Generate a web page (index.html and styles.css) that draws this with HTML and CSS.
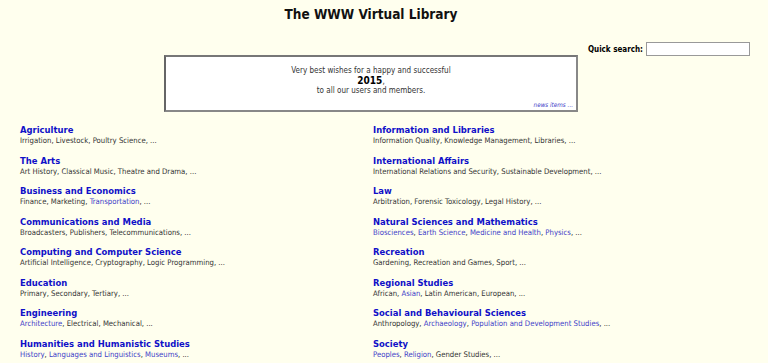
FILE: index.html
```html
<!DOCTYPE html>
<html lang="en">
<head>
    <meta charset="UTF-8">
    <title>The WWW Virtual Library</title>
    <link rel="stylesheet" href="styles.css">
</head>
<body>
    <!-- Header -->
    <h1 class="title">The WWW Virtual Library</h1>

    <form class="search">
        <label for="q">Quick search:</label>
        <input type="text" id="q" name="q">
    </form>

    <!-- News box -->
    <div class="news">
        <p>Very best wishes for a happy and successful<br>
        <b>2015</b>,<br>
        to all our users and members.</p>
        <a class="news-more" href="#">news items ...</a>
    </div>

    <!-- Categories -->
    <div class="cats">
        <div class="cat">
            <a class="cat-title" href="#">Agriculture</a>
            <div class="cat-sub">Irrigation, Livestock, Poultry Science, ...</div>
        </div>
        <div class="cat">
            <a class="cat-title" href="#">Information and Libraries</a>
            <div class="cat-sub">Information Quality, Knowledge Management, Libraries, ...</div>
        </div>
        <div class="cat">
            <a class="cat-title" href="#">The Arts</a>
            <div class="cat-sub">Art History, Classical Music, Theatre and Drama, ...</div>
        </div>
        <div class="cat">
            <a class="cat-title" href="#">International Affairs</a>
            <div class="cat-sub">International Relations and Security, Sustainable Development, ...</div>
        </div>
        <div class="cat">
            <a class="cat-title" href="#">Business and Economics</a>
            <div class="cat-sub">Finance, Marketing, <a href="#">Transportation</a>, ...</div>
        </div>
        <div class="cat">
            <a class="cat-title" href="#">Law</a>
            <div class="cat-sub">Arbitration, Forensic Toxicology, Legal History, ...</div>
        </div>
        <div class="cat">
            <a class="cat-title" href="#">Communications and Media</a>
            <div class="cat-sub">Broadcasters, Publishers, Telecommunications, ...</div>
        </div>
        <div class="cat">
            <a class="cat-title" href="#">Natural Sciences and Mathematics</a>
            <div class="cat-sub"><a href="#">Biosciences</a>, <a href="#">Earth Science</a>, <a href="#">Medicine and Health</a>, <a href="#">Physics</a>, ...</div>
        </div>
        <div class="cat">
            <a class="cat-title" href="#">Computing and Computer Science</a>
            <div class="cat-sub">Artificial Intelligence, Cryptography, Logic Programming, ...</div>
        </div>
        <div class="cat">
            <a class="cat-title" href="#">Recreation</a>
            <div class="cat-sub">Gardening, Recreation and Games, Sport, ...</div>
        </div>
        <div class="cat">
            <a class="cat-title" href="#">Education</a>
            <div class="cat-sub">Primary, Secondary, Tertiary, ...</div>
        </div>
        <div class="cat">
            <a class="cat-title" href="#">Regional Studies</a>
            <div class="cat-sub">African, <a href="#">Asian</a>, Latin American, European, ...</div>
        </div>
        <div class="cat">
            <a class="cat-title" href="#">Engineering</a>
            <div class="cat-sub"><a href="#">Architecture</a>, Electrical, Mechanical, ...</div>
        </div>
        <div class="cat">
            <a class="cat-title" href="#">Social and Behavioural Sciences</a>
            <div class="cat-sub">Anthropology, <a href="#">Archaeology</a>, <a href="#">Population and Development Studies</a>, ...</div>
        </div>
        <div class="cat">
            <a class="cat-title" href="#">Humanities and Humanistic Studies</a>
            <div class="cat-sub"><a href="#">History</a>, <a href="#">Languages and Linguistics</a>, <a href="#">Museums</a>, ...</div>
        </div>
        <div class="cat">
            <a class="cat-title" href="#">Society</a>
            <div class="cat-sub"><a href="#">Peoples</a>, <a href="#">Religion</a>, Gender Studies, ...</div>
        </div>
    </div>
</body>
</html>
```

FILE: styles.css
```css
/* General */
body {
    margin: 0;
    background-color: #ffffee;
    font-family: "DejaVu Sans Condensed", "DejaVu Sans", sans-serif;
    color: #333;
}

a {
    color: #4040c8;
    text-decoration: none;
}

.title {
    width: 742px;
    margin: 0;
    padding-top: 7px;
    height: 23px;
    text-align: center;
    font-size: 13.5px;
    font-weight: bold;
    line-height: 15px;
    color: #111;
}

/* Quick search */
.search {
    display: flex;
    justify-content: flex-end;
    align-items: center;
    gap: 3px;
    margin: 0;
    padding: 12px 18px 0 0;
    height: 14px;
}

.search label {
    font-size: 8px;
    font-weight: bold;
    color: #000;
}

.search input {
    width: 100px;
    height: 10px;
    padding: 1px;
    margin: 0;
    border: 1px solid #999;
    background: #fff;
}

/* News box */
.news {
    position: relative;
    box-sizing: border-box;
    width: 414px;
    height: 57px;
    margin: -1px 0 0 164px;
    background: #fff;
    border: 2px solid #888;
    border-top-color: #777;
    border-left-color: #666;
    text-align: center;
}

.news p {
    margin: 9px 0 0;
    font-size: 8px;
    line-height: 9.5px;
}

.news p b {
    font-size: 10px;
    color: #000;
}

.news-more {
    position: absolute;
    right: 3px;
    bottom: 2px;
    font-size: 6.3px;
    font-style: italic;
}

/* Categories */
.cats {
    display: grid;
    grid-template-columns: 353px 1fr;
    padding: 12px 0 0 20px;
}

.cat {
    height: 30.57px;
}

.cat-title {
    display: block;
    font-size: 9.4px;
    font-weight: bold;
    line-height: 12px;
    color: #1010c8;
}

.cat-sub {
    font-size: 7.7px;
    line-height: 10px;
}
```
